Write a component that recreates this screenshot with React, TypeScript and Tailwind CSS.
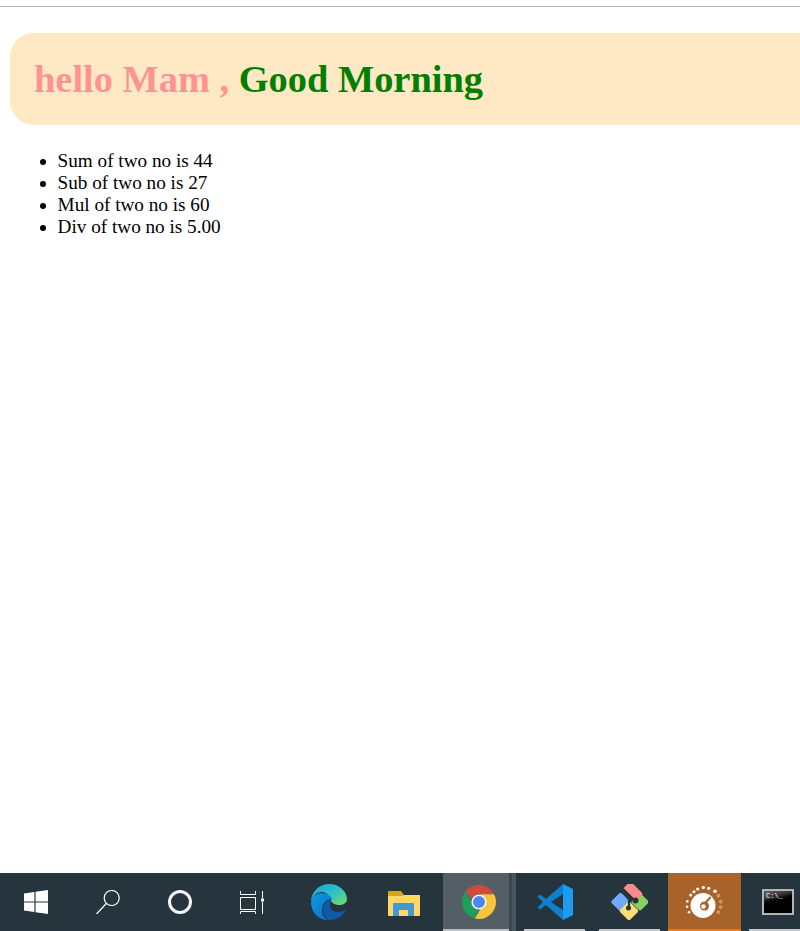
import React from 'react';

const results = ['Sum of two no is 44', 'Sub of two no is 27', 'Mul of two no is 60', 'Div of two no is 5.00'];

const WindowsIcon = () => (
  <svg width="24" height="24" viewBox="0 0 24 24" fill="#fff">
    <path d="M0 3.400 10.400 2v9.500H0zM11.600 1.800 24 0v11.500H11.600zM0 12.500h10.400V22L0 20.600zM11.600 12.500H24V24l-12.400-1.800z" />
  </svg>
);

const SearchIcon = () => (
  <svg width="24" height="24" viewBox="0 0 24 24" fill="none" stroke="#fff" strokeWidth="1.200">
    <circle cx="15.700" cy="8" r="7.500" />
    <path d="M10.300 13.500 .5 24" />
  </svg>
);

const TaskViewIcon = () => (
  <svg width="24" height="23" viewBox="0 0 24 23" fill="none" stroke="#fff" strokeWidth="1">
    <path d="M.5 0v3.500h15V0M.5 6.500h15v12H.5zM.5 23v-2.500h15V23M22.500 0v7M22.500 11v12" />
    <rect x="21" y="7.500" width="3" height="3" fill="#fff" stroke="none" />
  </svg>
);

const EdgeIcon = () => (
  <svg width="36" height="36" viewBox="0 0 36 36">
    <defs>
      <linearGradient id="edgeTop" x1="0" y1="0" x2="1" y2="1">
        <stop offset="0" stopColor="#1b9ede" />
        <stop offset="0.55" stopColor="#35c1c0" />
        <stop offset="1" stopColor="#72e45c" />
      </linearGradient>
      <linearGradient id="edgeMid" x1="0" y1="0" x2="1" y2="1">
        <stop offset="0" stopColor="#0c9ae6" />
        <stop offset="1" stopColor="#0b6cc4" />
      </linearGradient>
    </defs>
    <path d="M0 18C0 8 8 0 18 0c11 0 18 8 18 15 0 4-4 6-8 6-4 0-7-2-8-4 0-5-5-9-9-9-6 0-10 5-11 10z" fill="url(#edgeTop)" />
    <path d="M0 18c1-5 5-9 11-9 5 0 9 3 10 6-6 0-10 5-10 11 0 4 2 8 6 10C7 36 0 28 0 18z" fill="url(#edgeMid)" />
    <path d="M21 15c-4 0-9 5-9 11 0 4 2 8 6 10 8 0 14-4 17-10-4 2-11 3-14 0-3-3-3-7 0-11z" fill="#0f5aa8" />
  </svg>
);

const FolderIcon = () => (
  <svg width="32" height="26" viewBox="0 0 32 26">
    <path d="M0 2a1 1 0 0 1 1-1h12l3 4h15a1 1 0 0 1 1 1v4H0z" fill="#dfa30f" />
    <path d="M0 6h14l3-1h14a1 1 0 0 1 1 1v19a1 1 0 0 1-1 1H1a1 1 0 0 1-1-1z" fill="#ffd867" />
    <path d="M5 26V14a1 1 0 0 1 1-1h19a1 1 0 0 1 1 1v12h-6v-6h-9v6z" fill="#3d9ad6" />
  </svg>
);

const ChromeIcon = () => (
  <svg width="34" height="34" viewBox="0 0 34 34">
    <path d="M17 0c6.600 0 12.300 3.800 15 9.300H17c-3.500 0-6.500 2.200-7.500 5.300L3.600 6.200C6.700 2.400 11.500 0 17 0z" fill="#cf4a3c" />
    <path d="M3.600 6.200 10.700 18.400c1 2.600 3.400 4.400 6.300 4.600L12.900 33.500C5.500 31.700 0 25 0 17c0-4.100 1.300-7.900 3.600-10.800z" fill="#1f9d5c" />
    <path d="M32 9.300c1.300 2.300 2 4.900 2 7.700 0 9.400-7.600 17-17 17-1.400 0-2.800-.2-4.100-.5l7.300-12.600c1.100-1.200 1.800-2.700 1.800-4.400 0-2.700-1.400-5.400-3.400-7.200z" fill="#f8c53a" />
    <circle cx="17" cy="17" r="7.600" fill="#f4f6f7" />
    <circle cx="17" cy="17" r="6" fill="#4f87f2" />
  </svg>
);

const VsCodeIcon = () => (
  <svg width="36" height="36" viewBox="0 0 36 36">
    <path d="M26 0 9 15 3 10.500 .5 12.500 6 18 .5 23.500 3 25.500 9 21 26 36V26L14 18 26 10z" fill="#0e80cd" />
    <path d="M26 0 36 5V31L26 36z" fill="#1b9cf0" />
  </svg>
);

const GitIcon = () => (
  <svg width="37" height="36" viewBox="0 0 37 36">
    <rect x="2.500" y="11" width="14" height="14" rx="2" transform="rotate(45 9.500 18)" fill="#73a8ff" />
    <rect x="22.500" y="11.500" width="13" height="13" rx="2" transform="rotate(45 29 18)" fill="#8ccf62" />
    <rect x="11" y="20" width="14" height="14" rx="2" transform="rotate(45 18 27)" fill="#fbdd77" />
    <rect x="13" y="2" width="18" height="10.500" rx="2" transform="rotate(45 22 7.250)" fill="#f78c8c" />
    <path d="M12 5 24 17M18 16v8" stroke="#25343d" strokeWidth="2.200" fill="none" />
    <circle cx="17.500" cy="24" r="2.500" fill="#25343d" />
    <circle cx="24.500" cy="16.500" r="3" fill="#25343d" />
    <circle cx="18" cy="13" r="2.500" fill="#25343d" />
  </svg>
);

const dots = [
  [3, 26.300, 1.300], [1, 20.700, 1.300], [1.300, 15.300, 1.400], [4.700, 9, 1.500], [8, 5.700, 1.500],
  [11.700, 3, 1.600], [17.300, 1.500, 1.600], [22.700, 2.300, 1.600], [29, 5.300, 1.800],
];
const rings = [[32.300, 9.700], [34.700, 15.700], [34.700, 21.300], [32.300, 26.300]];

const GaugeIcon = () => (
  <svg width="37" height="32" viewBox="0 0 37 32">
    {dots.map(([x, y, r], i) => (
      <circle key={i} cx={x} cy={y} r={r} fill="#fff" />
    ))}
    {rings.map(([x, y], i) => (
      <circle key={i} cx={x} cy={y} r="1.200" fill="none" stroke="#f3d9c2" strokeWidth="0.800" />
    ))}
    <circle cx="17" cy="19.500" r="12.500" fill="#fff" />
    <circle cx="18.500" cy="20" r="4.500" fill="#a8632b" />
    <circle cx="17.500" cy="20.500" r="2.200" fill="#fff" />
    <path d="M19 17.500 24.500 11" stroke="#a8632b" strokeWidth="2" />
  </svg>
);

const CmdIcon = () => (
  <div className="w-[32px] h-[26px] border-2 border-[#aeb6ba] flex flex-col bg-[linear-gradient(165deg,#666_0%,#333_28%,#000_42%)]">
    <div className="text-[7px] leading-[8px] text-white font-['Liberation_Mono',monospace] pl-[2px] pt-[1px]">C:\_</div>
  </div>
);

export default function App() {
  return (
    <div className="w-[800px] h-[931px] bg-white flex flex-col overflow-hidden font-['Liberation_Serif',serif] text-black">
      <div className="mt-[6px] h-px bg-[#b4b4b4]" />

      <h1 className="mt-[26px] ml-[10px] h-[92px] pt-[2px] rounded-l-[24px] bg-[#ffe8c4] pl-6 flex items-center text-[38.4px] font-bold whitespace-pre">
        <span className="text-[#ff9393]">hello Mam , </span>
        <span className="text-[#007f00]">Good Morning</span>
      </h1>

      <ul className="mt-[25px] pl-[57.6px] list-disc text-[19.2px] leading-[22px]">
        {results.map((r) => (
          <li key={r}>{r}</li>
        ))}
      </ul>

      <div className="mt-auto h-[58px] bg-[#25343d] flex">
        <div className="w-[72px] flex items-center justify-center"><WindowsIcon /></div>
        <div className="w-[72px] flex items-center justify-center"><SearchIcon /></div>
        <div className="w-[72px] flex items-center justify-center">
          <div className="w-[24px] h-[24px] rounded-full border-[3.5px] border-[#f4f6f7]" />
        </div>
        <div className="w-[72px] flex items-center justify-center"><TaskViewIcon /></div>
        <div className="w-[82px] flex items-center justify-center"><EdgeIcon /></div>
        <div className="w-[68px] flex items-center justify-center pt-[2px]"><FolderIcon /></div>
        <div className="w-[66px] ml-[5px] pl-[6px] pt-[2px] bg-[#545f65] border-b-2 border-[#b8bec1] flex items-center justify-center"><ChromeIcon /></div>
        <div className="w-[3px] bg-[#3a474f]" />
        <div className="w-[4px] bg-[#4a565d]" />
        <div className="w-[61px] ml-[8px] pt-[2px] flex items-center justify-center border-b-2 border-[#c5c9cb]"><VsCodeIcon /></div>
        <div className="w-[61px] ml-[14px] pt-[2px] flex items-center justify-center border-b-2 border-[#c5c9cb]"><GitIcon /></div>
        <div className="w-[73px] ml-[8px] pt-[2px] bg-[#a8632b] border-b-2 border-[#ee7a16] flex items-center justify-center"><GaugeIcon /></div>
        <div className="flex-1 ml-[8px] pl-[7px] pt-[2px] flex items-center justify-center border-b-2 border-[#c5c9cb]"><CmdIcon /></div>
      </div>
    </div>
  );
}
